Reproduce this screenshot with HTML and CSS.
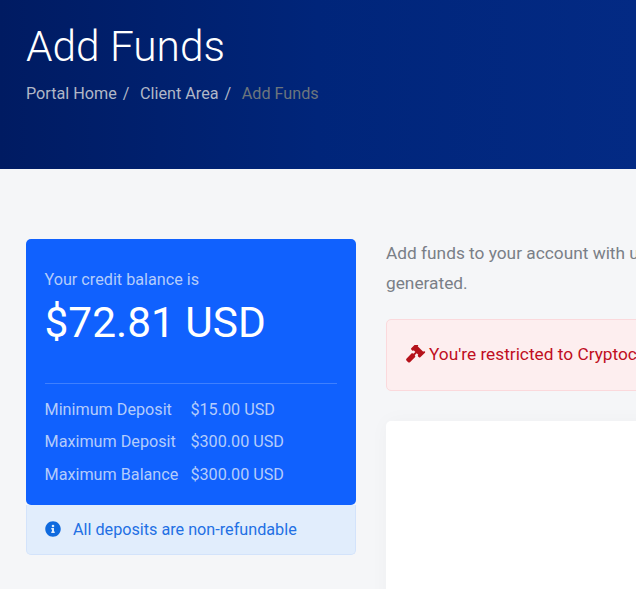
FILE: index.html
```html
<!DOCTYPE html>
<html lang="en">
<head>
  <meta charset="UTF-8">
  <meta name="viewport" content="width=device-width, initial-scale=1.0">
  <title>Add Funds</title>
  <link rel="stylesheet" href="styles.css">
</head>
<body>
  <header class="page-header">
    <h1>Add Funds</h1>
    <ol class="breadcrumb">
      <li><a href="#">Portal Home</a></li>
      <li><a href="#">Client Area</a></li>
      <li class="active">Add Funds</li>
    </ol>
  </header>

  <main class="content">
    <aside class="side">
      <div class="balance-card">
        <p class="balance-label">Your credit balance is</p>
        <p class="balance-amount">$72.81 USD</p>
        <hr>
        <div class="limits">
          <span>Minimum Deposit</span><span>$15.00 USD</span>
          <span>Maximum Deposit</span><span>$300.00 USD</span>
          <span>Maximum Balance</span><span>$300.00 USD</span>
        </div>
      </div>
      <div class="note">
        <svg class="note-icon" viewBox="0 0 512 512" width="16" height="16"><path fill="currentColor" d="M256 8C119 8 8 119 8 256s111 248 248 248 248-111 248-248S393 8 256 8zm0 110a42 42 0 1 1 0 84 42 42 0 0 1 0-84zm56 254c0 7-5 12-12 12h-88c-7 0-12-5-12-12v-24c0-7 5-12 12-12h12v-64h-12c-7 0-12-5-12-12v-24c0-7 5-12 12-12h64c7 0 12 5 12 12v100h12c7 0 12 5 12 12z"/></svg>
        <span class="note-text">All deposits are non-refundable</span>
      </div>
    </aside>

    <section class="main-col">
      <p class="intro">Add funds to your account with us to avoid lots of small transactions and to have any recurring invoices automatically<br>generated.</p>
      <div class="alert">
        <svg class="alert-icon" viewBox="0 0 512 512" width="20" height="20"><path fill="currentColor" d="M504 192l-23-23c-9-9-24-9-34 0l-6 6L299 33l6-6c9-9 9-24 0-34L282-30c-9-9-24-9-34 0L135 83c-9 9-9 24 0 34l23 23c9 9 24 9 34 0l6-6 42 42-50 50-6-6c-12-12-33-12-45 0L11 349c-12 12-12 33 0 45l45 45c12 12 33 12 45 0l128-128c12-12 12-33 0-45l-6-6 50-50 42 42-6 6c-9 9-9 24 0 34l23 23c9 9 24 9 34 0l113-113c13-9 13-24 4-34z"/></svg>
        <span>You're restricted to Cryptocurrency payments only.</span>
      </div>
      <div class="panel"></div>
    </section>
  </main>
</body>
</html>
```

FILE: styles.css
```css
* {
  box-sizing: border-box;
}

html, body {
  overflow: hidden;
}

body {
  margin: 0;
  height: 589px;
  font-family: Roboto, "Liberation Sans", sans-serif;
  font-size: 16.2px;
  line-height: 1.5;
  background-color: #f5f6f8;
  color: #7a7f87;
}

.page-header {
  height: 169px;
  padding: 18px 26px 0;
  background: linear-gradient(90deg, #001b62, #00257a 50%, #032a84);
}

.page-header h1 {
  margin: 0;
  font-size: 42.4px;
  font-weight: 300;
  line-height: 58px;
  color: #fff;
}

.breadcrumb {
  display: flex;
  margin: 6px 0 0;
  padding: 0;
  list-style: none;
  line-height: 24px;
  color: #6c757d;
}

.breadcrumb a {
  color: #b0b7c7;
  text-decoration: none;
}

.breadcrumb li:not(.active)::after {
  content: "/";
  margin: 0 10.5px 0 6px;
  color: #b0b7c7;
}

.content {
  display: flex;
  gap: 30px;
  width: 1400px;
  padding: 70px 0 0 26px;
}

.side {
  flex: 0 0 330px;
}

.balance-card {
  position: relative;
  padding: 29px 19px 13.5px 18.5px;
  background-color: #1061fe;
  border-radius: 5px;
  color: #b4ccfb;
}

.balance-label {
  margin: 0;
  line-height: 24px;
}

.balance-amount {
  margin: 2px 0 0;
  font-size: 42.4px;
  line-height: 58px;
  color: #fff;
}

.balance-card hr {
  margin: 31px 0 0;
  border: 0;
  border-top: 1px solid #3f80fe;
}

.limits {
  display: grid;
  grid-template-columns: max-content max-content;
  column-gap: 12px;
  margin-top: 9.5px;
  line-height: 32.5px;
}

.note {
  display: flex;
  align-items: center;
  gap: 12px;
  height: 50px;
  padding: 0 18px;
  background-color: #e1edfc;
  border: 1px solid #d3e3fb;
  border-top: 0;
  border-radius: 0 0 5px 5px;
  color: #2370e4;
}

.note-icon {
  flex: none;
  color: #0f6ade;
}

.note-text {
  padding-top: 2px;
}

.main-col {
  flex: 1;
}

.intro {
  margin: -1px 0 0;
  font-size: 17.3px;
  line-height: 30px;
}

.alert {
  display: flex;
  align-items: center;
  gap: 3px;
  height: 72px;
  margin-top: 21px;
  padding: 0 19px;
  font-size: 17.3px;
  background-color: #fdeeef;
  border: 1px solid #fbd9dc;
  border-radius: 5px;
  color: #c00e22;
}

.alert-icon {
  flex: none;
  color: #b5121b;
}

.panel {
  height: 300px;
  margin-top: 30px;
  background-color: #fff;
  border-radius: 5px;
  box-shadow: 0 0 20px rgba(0, 0, 0, 0.03);
}
```
